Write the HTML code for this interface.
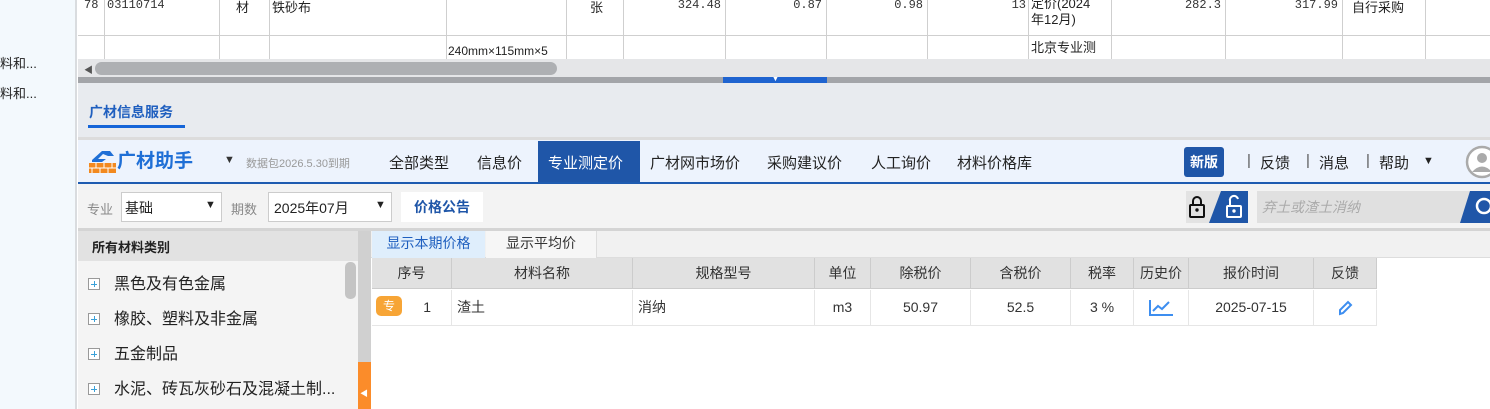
<!DOCTYPE html>
<html><head><meta charset="utf-8"><style>
*{margin:0;padding:0;box-sizing:border-box}
body{width:1490px;height:409px;overflow:hidden;position:relative;background:#fff;font-family:"Liberation Sans","Noto Sans CJK SC",sans-serif;color:#222}
.a{position:absolute;white-space:nowrap}
.vl{position:absolute;top:0;height:60px;width:1px;background:#cfcfcf}
.mono{font-family:"Liberation Mono","Noto Sans CJK SC",monospace;font-size:12px;color:#333}
.nav{font-size:15px;top:152px;color:#222}
.cat{font-size:15px;left:88px}
.cat b{display:inline-block;width:12px;height:12px;border:1px solid #999;margin-right:14px;position:relative;top:1px;background:#fff}
.cat b:before{content:"";position:absolute;left:2px;top:4.5px;width:6px;height:1px;background:#3aa0d8}
.cat b:after{content:"";position:absolute;left:4.5px;top:2px;width:1px;height:6px;background:#3aa0d8}
.th{position:absolute;top:258px;height:31px;background:#e1e1e1;border-right:1px solid #ccc;border-bottom:1px solid #ccc;font-size:14px;color:#333;text-align:center;line-height:31px}
.td{position:absolute;top:290px;height:36px;background:#fff;border-right:1px solid #e6e6e6;border-bottom:1px solid #e6e6e6;font-size:14px;color:#333;text-align:center;line-height:34px}
</style></head><body>
<div class="a" style="left:0;top:0;width:77px;height:409px;background:#f3f9fd;border-right:2px solid #d9dcdf"></div>
<div class="a" style="left:0;top:53px;font-size:13px">料和...</div>
<div class="a" style="left:0;top:83px;font-size:13px">料和...</div>
<div class="a" style="left:78px;top:35px;width:1412px;height:1px;background:#cfcfcf"></div>
<div class="vl" style="left:104px"></div><div class="vl" style="left:219px"></div><div class="vl" style="left:269px"></div><div class="vl" style="left:446px"></div><div class="vl" style="left:566px"></div><div class="vl" style="left:623px"></div><div class="vl" style="left:725px"></div><div class="vl" style="left:826px"></div><div class="vl" style="left:927px"></div><div class="vl" style="left:1028px"></div><div class="vl" style="left:1111px"></div><div class="vl" style="left:1225px"></div><div class="vl" style="left:1342px"></div><div class="vl" style="left:1425px"></div>
<div class="a mono" style="left:84px;top:-2px">78</div>
<div class="a mono" style="left:107px;top:-2px">03110714</div>
<div class="a" style="left:236px;top:-3px;font-size:13px">材</div>
<div class="a" style="left:272px;top:-3px;font-size:13px">铁砂布</div>
<div class="a" style="left:590px;top:-3px;font-size:13px">张</div>
<div class="a mono" style="left:650px;top:-2px;width:71px;text-align:right">324.48</div>
<div class="a mono" style="left:740px;top:-2px;width:82px;text-align:right">0.87</div>
<div class="a mono" style="left:840px;top:-2px;width:83px;text-align:right">0.98</div>
<div class="a mono" style="left:940px;top:-2px;width:86px;text-align:right">13</div>
<div class="a" style="left:1031px;top:-4px;font-size:13px;line-height:16px">定价(2024<br>年12月)</div>
<div class="a mono" style="left:1120px;top:-2px;width:101px;text-align:right">282.3</div>
<div class="a mono" style="left:1230px;top:-2px;width:108px;text-align:right">317.99</div>
<div class="a" style="left:1352px;top:-3px;font-size:13px">自行采购</div>
<div class="a" style="left:448px;top:44px;font-size:12px">240mm×115mm×5</div>
<div class="a" style="left:1031px;top:37px;font-size:13px">北京专业测</div>
<div class="a" style="left:78px;top:59px;width:1412px;height:18px;background:#e5e6e8"></div>
<div class="a" style="left:84px;top:63px;font-size:9px;color:#555">◀</div>
<div class="a" style="left:95px;top:62px;width:462px;height:13px;border-radius:7px;background:#aeb0b3"></div>
<div class="a" style="left:78px;top:77px;width:1412px;height:6px;background:#a3a5a9"></div>
<div class="a" style="left:723px;top:77px;width:104px;height:6px;background:#1f64d0"></div>
<div class="a" style="left:772px;top:76px;font-size:7px;color:#fff">▼</div>
<div class="a" style="left:78px;top:83px;width:1412px;height:55px;background:#e8ebef"></div>
<div class="a" style="left:89px;top:102px;font-size:14px;font-weight:bold;color:#1f5fbf">广材信息服务</div>
<div class="a" style="left:88px;top:125px;width:97px;height:3px;background:#1565d8"></div>
<div class="a" style="left:78px;top:137px;width:1412px;height:3px;background:#dcdcdc"></div>
<div class="a" style="left:78px;top:140px;width:1412px;height:42px;background:#edf3fd"></div>
<div class="a" style="left:78px;top:182px;width:1412px;height:2px;background:#1e5bb0"></div>
<svg class="a" style="left:88px;top:148px" width="30" height="26" viewBox="0 0 30 26"><path d="M4 12 L14 3 L22 3 L26 8 L20 8 L15 6 L10 11 L18 11 L14 14 L4 14Z" fill="#1f6fd6"/><rect x="1" y="15" width="27" height="10" fill="#f2891f"/><path d="M1 20H28M8 15V20M16 15V20M24 15V20M4 20V25M12 20V25M20 20V25" stroke="#fff" stroke-width="1"/></svg>
<div class="a" style="left:117px;top:146px;font-size:19px;font-weight:bold;color:#1f6fd6">广材助手</div>
<div class="a" style="left:224px;top:154px;font-size:11px;color:#333">▼</div>
<div class="a" style="left:246px;top:155px;font-size:11px;color:#999">数据包2026.5.30到期</div>
<div class="a" style="left:538px;top:141px;width:102px;height:41px;background:#1f56a8"></div>
<div class="a nav" style="left:389px">全部类型</div>
<div class="a nav" style="left:477px">信息价</div>
<div class="a nav" style="left:548px;color:#fff">专业测定价</div>
<div class="a nav" style="left:650px">广材网市场价</div>
<div class="a nav" style="left:767px">采购建议价</div>
<div class="a nav" style="left:871px">人工询价</div>
<div class="a nav" style="left:957px">材料价格库</div>
<div class="a" style="left:1184px;top:147px;width:40px;height:30px;background:#1f56a8;border-radius:3px;color:#fff;font-size:14px;font-weight:bold;text-align:center;line-height:30px">新版</div>
<div class="a" style="left:1247px;top:152px;font-size:15px;color:#555">|</div>
<div class="a nav" style="left:1260px">反馈</div>
<div class="a" style="left:1306px;top:152px;font-size:15px;color:#555">|</div>
<div class="a nav" style="left:1319px">消息</div>
<div class="a" style="left:1366px;top:152px;font-size:15px;color:#555">|</div>
<div class="a nav" style="left:1379px">帮助</div>
<div class="a" style="left:1423px;top:155px;font-size:11px">▼</div>
<svg class="a" style="left:1465px;top:145px" width="30" height="34"><circle cx="17" cy="17" r="15" fill="#fff" stroke="#aaa" stroke-width="2.5"/><circle cx="17" cy="13" r="5" fill="#aaa"/><path d="M7 27 Q17 16 27 27" fill="#aaa"/></svg>
<div class="a" style="left:78px;top:184px;width:1412px;height:44px;background:#f3f3f3"></div>
<div class="a" style="left:87px;top:199px;font-size:13px;color:#888">专业</div>
<div class="a" style="left:121px;top:192px;width:101px;height:30px;background:#fff;border:1px solid #ccc"></div>
<div class="a" style="left:125px;top:198px;font-size:14px">基础</div>
<div class="a" style="left:205px;top:199px;font-size:11px">▼</div>
<div class="a" style="left:231px;top:199px;font-size:13px;color:#888">期数</div>
<div class="a" style="left:268px;top:192px;width:124px;height:30px;background:#fff;border:1px solid #ccc"></div>
<div class="a" style="left:274px;top:198px;font-size:14px">2025年07月</div>
<div class="a" style="left:375px;top:199px;font-size:11px">▼</div>
<div class="a" style="left:401px;top:192px;width:82px;height:30px;background:#fff;color:#1f56a8;font-weight:bold;font-size:14px;text-align:center;line-height:30px">价格公告</div>
<div class="a" style="left:1186px;top:191px;width:62px;height:32px;background:#e3e3e3"></div>
<svg class="a" style="left:1186px;top:191px" width="62" height="32"><path d="M35 0 H62 V32 H23Z" fill="#1f56a8"/><rect x="4" y="14" width="14" height="12" rx="1" fill="none" stroke="#111" stroke-width="2"/><path d="M7 14 V10 A4 4 0 0 1 15 10 V14" fill="none" stroke="#111" stroke-width="2"/><circle cx="11" cy="19" r="1.7" fill="#111"/><rect x="41" y="15" width="14" height="11" rx="1" fill="none" stroke="#fff" stroke-width="2"/><path d="M44 15 V10 A4 4 0 0 1 52 8" fill="none" stroke="#fff" stroke-width="2"/><circle cx="48" cy="20" r="1.7" fill="#fff"/></svg>
<div class="a" style="left:1257px;top:191px;width:233px;height:32px;background:#e0e0e0"></div>
<div class="a" style="left:1262px;top:197px;font-size:14px;color:#aaa;font-style:italic">弃土或渣土消纳</div>
<svg class="a" style="left:1460px;top:191px" width="30" height="32"><path d="M10 0H30V32H0Z" fill="#1f56a8"/><circle cx="24" cy="15" r="7" fill="none" stroke="#fff" stroke-width="2.5"/></svg>
<div class="a" style="left:78px;top:228px;width:1412px;height:3px;background:#d4d4d4"></div>
<div class="a" style="left:78px;top:231px;width:280px;height:178px;background:#f4f4f4"></div>
<div class="a" style="left:78px;top:231px;width:280px;height:30px;background:#e2e2e2"></div>
<div class="a" style="left:92px;top:237px;font-size:13px;font-weight:bold">所有材料类别</div>
<div class="a" style="left:345px;top:262px;width:11px;height:37px;border-radius:5px;background:#c4c4c4"></div>
<div class="a cat" style="top:270px;font-size:16px"><b></b>黑色及有色金属</div>
<div class="a cat" style="top:305px;font-size:16px"><b></b>橡胶、塑料及非金属</div>
<div class="a cat" style="top:340px;font-size:16px"><b></b>五金制品</div>
<div class="a cat" style="top:375px;font-size:16px"><b></b>水泥、砖瓦灰砂石及混凝土制...</div>
<div class="a" style="left:358px;top:231px;width:13px;height:131px;background:#d0d0d0"></div>
<div class="a" style="left:358px;top:362px;width:13px;height:47px;background:#fb8c2a"></div>
<div class="a" style="left:360px;top:388px;font-size:8px;color:#fff">◀</div>
<div class="a" style="left:371px;top:231px;width:1119px;height:27px;background:#f1f1f1;border-bottom:1px solid #ddd"></div>
<div class="a" style="left:372px;top:231px;width:113px;height:27px;background:#dfeefc;color:#1f5fbf;font-size:14px;text-align:center;line-height:25px">显示本期价格</div>
<div class="a" style="left:486px;top:231px;width:111px;height:27px;background:#f6f6f6;border-right:1px solid #ddd;font-size:14px;text-align:center;line-height:25px;color:#333">显示平均价</div>
<div class="th" style="left:372px;width:80px">序号</div>
<div class="th" style="left:452px;width:181px">材料名称</div>
<div class="th" style="left:633px;width:182px">规格型号</div>
<div class="th" style="left:815px;width:56px">单位</div>
<div class="th" style="left:871px;width:100px">除税价</div>
<div class="th" style="left:971px;width:100px">含税价</div>
<div class="th" style="left:1071px;width:63px">税率</div>
<div class="th" style="left:1134px;width:55px">历史价</div>
<div class="th" style="left:1189px;width:125px">报价时间</div>
<div class="th" style="left:1314px;width:63px">反馈</div>
<div class="td" style="left:372px;width:80px;text-align:right;padding-right:20px">1</div>
<div class="a" style="left:376px;top:296px;width:26px;height:20px;background:#f7a536;border-radius:5px;color:#fff;font-size:12px;text-align:center;line-height:20px">专</div>
<div class="td" style="left:452px;width:181px;text-align:left;padding-left:5px">渣土</div>
<div class="td" style="left:633px;width:182px;text-align:left;padding-left:5px">消纳</div>
<div class="td" style="left:815px;width:56px">m3</div>
<div class="td" style="left:871px;width:100px">50.97</div>
<div class="td" style="left:971px;width:100px">52.5</div>
<div class="td" style="left:1071px;width:63px">3 %</div>
<div class="td" style="left:1134px;width:55px"><svg width="26" height="20" style="vertical-align:middle"><path d="M2 2V17H25" fill="none" stroke="#3d8ef0" stroke-width="2"/><path d="M5 13L10 8L14 11L21 4" fill="none" stroke="#3d8ef0" stroke-width="2"/></svg></div>
<div class="td" style="left:1189px;width:125px">2025-07-15</div>
<div class="td" style="left:1314px;width:63px"><svg width="16" height="16" style="vertical-align:middle"><path d="M3 14L3 10L11 2L14 5L6 13Z" fill="none" stroke="#3d8ef0" stroke-width="2"/></svg></div>
</body></html>
